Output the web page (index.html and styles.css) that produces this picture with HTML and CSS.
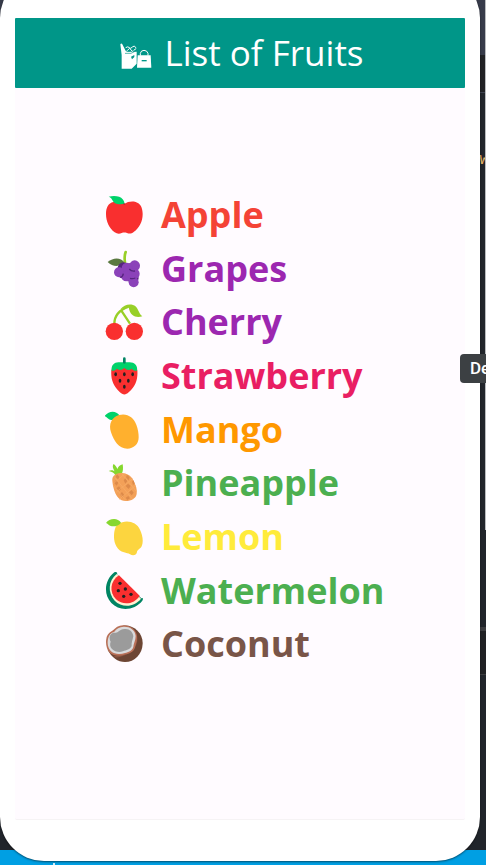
FILE: index.html
```html
<!DOCTYPE html>
<html lang="en">
<head>
<meta charset="utf-8">
<meta name="viewport" content="width=device-width, initial-scale=1">
<title>List of Fruits</title>
<link rel="stylesheet" href="styles.css">
</head>
<body>
<div class="desktop">
  <div class="editor">
    <div class="editor-title"></div>
    <div class="editor-tabs"></div>
    <div class="editor-code"><span class="code">w</span></div>
    <div class="editor-panel"></div>
    <div class="editor-terminal"></div>
    <div class="status-bar"><span class="status-mark"></span></div>
  </div>
  <div class="scrollbar"></div>
  <main class="phone">
    <div class="screen">
      <header class="app-bar">
        <svg class="bags" viewBox="0 0 96 84" aria-hidden="true">
          <path fill="#fff" d="M1 4q3-5 6 0l9 18 3 4h31v36L35 77H5V36z"/>
          <path fill="none" stroke="#fff" stroke-width="3" d="M17 14q7-5 11 0t9-2 12 3M19 25l10-9 8 9 11-8"/>
          <path fill="none" stroke="#009688" stroke-width="2" d="M15 31h18l14-7M24 22l4 5M39 20l2 5"/>
          <path fill="#009688" d="M33 41l10-5v6l-7 7z"/>
          <path fill="#fff" d="M53 37h39l2 37H51z"/>
          <path fill="none" stroke="#fff" stroke-width="3" d="M61 38v-7q2-9 11-9t12 9v7"/>
          <path stroke="#009688" stroke-width="4" d="M65 53h15"/>
        </svg>
        <h1>List of Fruits</h1>
      </header>
      <ul class="fruits">
        <li class="fruit red">
          <svg class="icon" viewBox="30 33 114 114" aria-hidden="true">
            <path fill="#f92f2f" d="M88 57c-9-7-23-8-33-6-15 3-22 17-22 36 0 23 10 43 26 55 7 5 15 5 21 2 6-2 10-2 16 0 7 3 14 2 20-3 17-12 27-31 27-54 0-19-7-32-21-36-11-3-25-1-34 6z"/>
            <path fill="#00d26a" d="M41 35c17-4 35-2 42 8 4 5 6 10 5 14-10 1-23 1-30-4-6-5-6-14-17-18z"/>
            <path fill="#a6252b" d="M84 57q4-4 8 0l-4 2z"/>
          </svg>Apple</li>
        <li class="fruit purple">
          <svg class="icon" viewBox="30 194 114 114" aria-hidden="true">
            <path fill="none" stroke="#98cf28" stroke-width="8" stroke-linecap="round" d="M92 200q-5 14-2 32"/>
            <path fill="#5b7940" d="M38 230c17-15 40-14 50 1-13 15-35 14-50-1z"/>
            <g fill="#57257f"><circle cx="86" cy="249" r="18"/><circle cx="108" cy="251" r="18"/><circle cx="82" cy="264" r="15"/><circle cx="105" cy="271" r="18"/><circle cx="117" cy="278" r="14"/></g>
            <g fill="#8b42b9"><circle cx="119" cy="241" r="16"/><circle cx="96" cy="248" r="16"/><circle cx="72" cy="261" r="15"/><circle cx="118" cy="265" r="16"/><circle cx="94" cy="272" r="16"/><circle cx="116" cy="291" r="15"/></g>
            <path fill="none" stroke="#57257f" stroke-width="4" d="M103 251q6 8 17 6M76 276q8-2 9-11M105 279q9 2 16-1"/>
          </svg>Grapes</li>
        <li class="fruit purple">
          <svg class="icon" viewBox="30 25 114 114" aria-hidden="true">
            <path fill="none" stroke="#98cf28" stroke-width="7" d="M58 88c0-22 12-41 43-52M79 48l26 39"/>
            <path fill="#98cf28" d="M76 44c10-11 23-17 38-13 17 5 15 25 28 34-16 5-37 2-41-28-10 1-17 5-25 7z"/>
            <circle cx="58" cy="110" r="26" fill="#f92f2f"/><circle cx="118" cy="110" r="26" fill="#f92f2f"/>
          </svg>Cherry</li>
        <li class="fruit pink">
          <svg class="icon" viewBox="30 185 114 114" aria-hidden="true">
            <path fill="#f92f2f" d="M49 223c-2 28 4 47 25 67 9 9 18 10 27 1 22-20 28-39 26-68-17-13-59-14-78 0z"/>
            <path fill="#00d26a" d="M50 226c-2-16 8-25 20-25h34c14 0 25 10 22 25-8 0-12-1-16-6-7 6-15 5-22-2-7 7-16 8-22 2-4 5-9 6-16 6z"/>
            <path stroke="#008463" stroke-width="8" stroke-linecap="round" d="M88 190v11"/>
            <g fill="#212121"><ellipse cx="62" cy="237" rx="4" ry="6"/><ellipse cx="88" cy="237" rx="4" ry="6"/><ellipse cx="113" cy="237" rx="4" ry="6"/><ellipse cx="75" cy="256" rx="4" ry="6"/><ellipse cx="100" cy="256" rx="4" ry="6"/><ellipse cx="88" cy="274" rx="4" ry="6"/></g>
          </svg>Strawberry</li>
        <li class="fruit orange">
          <svg class="icon" viewBox="30 31 114 114" aria-hidden="true">
            <path fill="#00d26a" d="M29 46c12-16 34-17 44-2-8 11-16 15-25 14-7-1-12-8-19-12z"/>
            <path fill="#ffb02e" d="M72 43c24-7 44 7 52 29 5 14 7 25 7 38 0 21-15 34-34 34-26 0-40-23-49-49-8-24 2-46 24-52z"/>
          </svg>Mango</li>
        <li class="fruit green">
          <svg class="icon" viewBox="30 192 114 114" aria-hidden="true">
            <path fill="#86d72f" d="M41 213c8-4 15-2 19 2-6-8-9-17-4-23 5 4 9 9 11 15 2-6 8-12 16-14 2 12 1 20-2 27l-20 6c-3-7-9-11-20-13z"/>
            <path fill="#f3a058" d="M52 242c-2-16 14-24 29-23 17 1 29 10 35 24 7 14 11 26 9 39-2 13-15 21-33 21-18-1-28-14-34-31-3-10-5-19-6-30z"/>
            <path fill="#dd8a4a" d="M66 222l7 8-3 9-8-8zM96 224l8 8-3 9-8-9zM57 248l6-8 7 8-5 9zM86 241l6-8 5 10-6 8zM64 265l8-6 7 8-7 7zM92 258l7-7 8 7-6 9zM111 245l5-4 3 10-5 4zM74 283l7-7 7 9-5 8zM102 277l8-7 6 8-6 8zM92 293l8-5 5 7-8 5z"/>
            <path fill="none" stroke="#f8ad68" stroke-width="2" d="M59 232l54 66M80 221l44 53M54 255l39 47M91 220l-36 31M113 236l-52 43M122 256l-49 42"/>
          </svg>Pineapple</li>
        <li class="fruit yellow">
          <svg class="icon" viewBox="30 23 114 114" aria-hidden="true">
            <path fill="#fcd53f" d="M69 42c22-15 55-9 66 16 8 17 11 36 5 50-4 8-13 10-14 17-2 10-12 12-21 7-5-3-11-4-18-6-21-6-31-28-30-50 1-15 3-27 12-34z"/>
            <path fill="#86d72f" d="M33 38c9-14 35-18 45-1-9 12-23 13-33 9-5-2-7-6-12-8z"/>
          </svg>Lemon</li>
        <li class="fruit green">
          <svg class="icon" viewBox="30 184 114 114" aria-hidden="true">
            <path fill="#008463" d="M58 185q4-3 8 1l77 76q2 4-1 8c-24 30-68 33-93 7-25-27-20-69 9-92z"/>
            <path fill="#fffbff" d="M68 184l79 77-8 2-73-72z"/>
            <path fill="#fff1d2" d="M65 190l73 74c-21 27-58 27-79 6-22-24-19-61 6-80z"/>
            <path fill="#f92f2f" d="M72 194l62 61c-15 25-49 31-71 11-21-21-18-55 9-72z"/>
            <g fill="#212121"><circle cx="75" cy="218" r="5"/><circle cx="91" cy="235" r="5"/><circle cx="70" cy="240" r="5"/><circle cx="108" cy="251" r="5"/><circle cx="86" cy="257" r="5"/></g>
          </svg>Watermelon</li>
        <li class="fruit brown">
          <svg class="icon" viewBox="30 345 114 114" aria-hidden="true">
            <path fill="#6d4534" d="M84 347c32-4 60 22 59 54-1 31-24 55-53 55-22 0-40-14-52-36z"/>
            <path fill="#8c5543" d="M110 355c24 14 22 48 2 66-15 13-38 25-57 20 23-9 53-23 55-86z"/>
            <path fill="#b97058" d="M84 346c18-2 39 10 42 33 1 16-5 27-6 34-5 14-19 18-28 20-15 6-37 5-48-5-9-9-13-28-10-42 2-13 11-20 20-25 8-8 16-14 30-15z"/>
            <path fill="#d9dadc" d="M86 350c17-1 35 9 36 28 0 14-7 24-7 33-4 13-15 15-25 18-15 5-32 4-42-5-9-9-12-24-9-37 2-12 9-19 19-22 6-9 15-14 28-15z"/>
            <path fill="#9b9b9b" d="M89 357c13-2 25 8 26 22-3 13-6 20-5 29-5 11-16 12-26 16-12 4-25 1-33-7-6-6-7-14-4-22-5-9-4-22 6-26 8-1 12 1 18-5 5-4 9-7 18-7z"/>
          </svg>Coconut</li>
      </ul>
    </div>
  </main>
  <div class="tooltip" role="tooltip">De</div>
</div>
</body>
</html>
```
FILE: styles.css
```css
* { box-sizing: border-box; }

body {
  margin: 0;
  font-family: "Open Sans", "Noto Sans", sans-serif;
}

.desktop {
  position: relative;
  display: grid;
  min-height: 100vh;
  overflow: hidden;
}

.editor,
.phone { grid-area: 1 / 1; }

.editor {
  display: flex;
  flex-direction: column;
  background: #21252b;
}

.editor-title { height: 55px; background: #373b4a; }
.editor-tabs { height: 38px; background: #202124; border-bottom: 1px solid #3f4350; }
.editor-code { flex: 1; padding-top: 57px; text-align: right; overflow: hidden; }
.code { display: block; margin-right: -3px; font: 16px/20px "Liberation Mono", monospace; color: #e5b567; }
.editor-panel { height: 48px; background: #202124; border-top: 4px solid #3c3d40; border-bottom: 1px solid #3c3d40; }
.editor-terminal { height: 175px; }
.status-bar { height: 15px; padding: 13px 0 0 53px; background: #009fe3; }
.status-mark { display: block; width: 2px; height: 2px; background: #d5effa; }

.scrollbar {
  position: absolute;
  top: 0;
  right: 0;
  width: 1px;
  height: 530px;
  background: #b9bbbe;
}

.phone {
  position: relative;
  display: flex;
  margin: -26px 6px 4px 0;
  padding: 44px 15px 41px;
  background: #fff;
  border-radius: 44px;
  box-shadow: 0 1px 2px rgba(0, 0, 0, 0.5);
}

.screen {
  display: flex;
  flex: 1;
  flex-direction: column;
  background: #fffbff;
  border-bottom: 1px solid #f6f3f5;
  border-radius: 2px;
}

.app-bar {
  display: flex;
  align-items: center;
  justify-content: center;
  gap: 12px;
  height: 70px;
  padding-left: 4px;
  background: #009688;
  border-radius: 1px;
  color: #fff;
}

.app-bar h1 { margin: 0; font-size: 35px; font-weight: 400; line-height: 52px; }
.bags { width: 32px; height: 28px; margin-top: 8px; }

.fruits {
  display: flex;
  flex: 1;
  flex-direction: column;
  margin: 0;
  padding: 100px 0 148px 90px;
  list-style: none;
}

.fruit {
  display: flex;
  flex: 1;
  align-items: center;
  gap: 18px;
  font-size: 36px;
  font-weight: 700;
  line-height: 52px;
}

.icon { width: 38px; height: 38px; }

.red { color: #f44336; }
.purple { color: #9c27b0; }
.pink { color: #e91e63; }
.orange { color: #ff9800; }
.green { color: #4caf50; }
.yellow { color: #ffeb3b; }
.brown { color: #795548; }

.tooltip {
  position: absolute;
  top: 354px;
  left: calc(100% - 26px);
  padding: 0 10px;
  background: #3c4043;
  border-radius: 4px;
  color: #fff;
  font: 500 17px/29px Roboto, sans-serif;
}
```
